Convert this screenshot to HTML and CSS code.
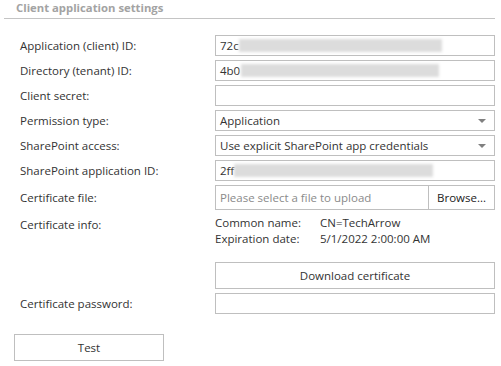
FILE: index.html
```html
<!DOCTYPE html>
<html lang="en">
  <head>
    <meta charset="UTF-8">
    <title>Client application settings</title>
    <link rel="stylesheet" href="styles.css">
  </head>
  <body>
    <div class="panel">
      <div class="legend">Client application settings</div>

      <div class="form">
        <div class="row">
          <div class="label">Application (client) ID:</div>
          <div class="field"><span class="val">72c</span><span class="blur b1"></span></div>
        </div>
        <div class="row">
          <div class="label">Directory (tenant) ID:</div>
          <div class="field"><span class="val">4b0</span><span class="blur b2"></span></div>
        </div>
        <div class="row">
          <div class="label">Client secret:</div>
          <div class="field"></div>
        </div>
        <div class="row">
          <div class="label">Permission type:</div>
          <div class="field select"><span class="val">Application</span><span class="caret"></span></div>
        </div>
        <div class="row">
          <div class="label">SharePoint access:</div>
          <div class="field select"><span class="val">Use explicit SharePoint app credentials</span><span class="caret"></span></div>
        </div>
        <div class="row">
          <div class="label">SharePoint application ID:</div>
          <div class="field"><span class="val">2ff</span><span class="blur b3"></span></div>
        </div>
        <div class="row">
          <div class="label">Certificate file:</div>
          <div class="field file">
            <span class="placeholder">Please select a file to upload</span>
            <span class="browse">Browse...</span>
          </div>
        </div>
        <div class="row row-info">
          <div class="label">Certificate info:</div>
          <div class="info">
            <div class="info-line"><span class="info-key">Common name:</span><span>CN=TechArrow</span></div>
            <div class="info-line"><span class="info-key">Expiration date:</span><span>5/1/2022 2:00:00 AM</span></div>
          </div>
        </div>
        <div class="row row-download">
          <div class="label"></div>
          <button class="btn download">Download certificate</button>
        </div>
        <div class="row">
          <div class="label">Certificate password:</div>
          <div class="field"></div>
        </div>
      </div>

      <button class="btn test">Test</button>
    </div>
  </body>
</html>
```

FILE: styles.css
```css
body {
  margin: 0;
  background: #ffffff;
  font-family: "Open Sans", "Noto Sans", sans-serif;
  font-size: 11.5px;
  line-height: 16px;
  color: #333333;
}

.panel {
  padding: 0 6px 0 4px;
}

.legend {
  height: 19px;
  box-sizing: border-box;
  padding-left: 12px;
  border-bottom: 1px solid #c4c4c4;
  color: #a3a3a3;
  font-weight: bold;
  font-size: 11.3px;
  line-height: 15px;
}

.form {
  display: flex;
  flex-direction: column;
  gap: 4px;
  margin-top: 16px;
}

.row {
  display: flex;
  align-items: center;
}

.label {
  width: 211px;
  padding-left: 16px;
  box-sizing: border-box;
  flex-shrink: 0;
}

.field {
  position: relative;
  display: flex;
  align-items: center;
  width: 280px;
  height: 21px;
  box-sizing: border-box;
  border: 1px solid #bfbfbf;
  padding-left: 4px;
  background: #ffffff;
}

.val {
  white-space: nowrap;
}

.blur {
  display: inline-block;
  height: 13px;
  background: #dcdcdc;
  filter: blur(1.5px);
}

.b1 { width: 203px; }
.b2 { width: 198px; margin-left: 1px; }
.b3 { width: 199px; }

.select .caret {
  position: absolute;
  right: 8px;
  top: 8px;
  border-left: 4px solid transparent;
  border-right: 4px solid transparent;
  border-top: 4px solid #808080;
}

.file {
  height: 25px;
  padding-right: 0;
  justify-content: space-between;
}

.placeholder {
  color: #8a8a8a;
}

.browse {
  align-self: stretch;
  display: flex;
  align-items: center;
  padding: 0 8px;
  border-left: 1px solid #bfbfbf;
  color: #222222;
}

.row-info {
  align-items: flex-start;
}

.row-info .label {
  padding-top: 3px;
}

.info {
  padding-top: 1px;
}

.info-line {
  display: flex;
}

.info-key {
  width: 105px;
}

.row-download {
  margin-top: 11px;
}

.btn {
  height: 27px;
  box-sizing: border-box;
  border: 1px solid #bfbfbf;
  background: #ffffff;
  font-family: inherit;
  font-size: 11.5px;
  color: #333333;
  padding: 0;
}

.download {
  width: 280px;
}

.test {
  display: block;
  width: 150px;
  margin: 20px 0 0 10px;
}
```
